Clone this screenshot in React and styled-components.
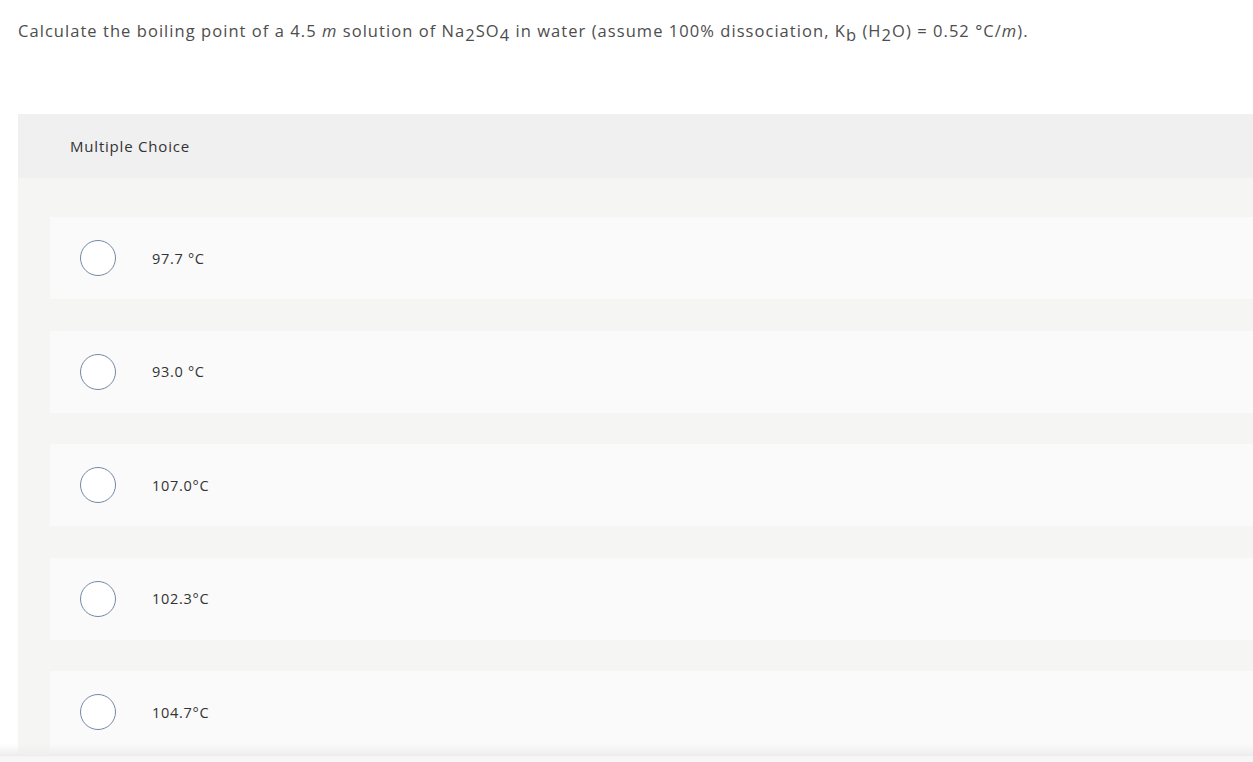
import styled, { createGlobalStyle } from "styled-components";

const Global = createGlobalStyle`
  html, body {
    margin: 0;
    padding: 0;
    background: #ffffff;
    font-family: "Open Sans", "Liberation Sans", sans-serif;
  }
`;

const Page = styled.div`
  padding: 19px 0 0 18px;
  overflow: hidden;
  height: 762px;
  box-sizing: border-box;
`;

const Question = styled.p`
  margin: 0;
  font-size: 16.5px;
  line-height: 24px;
  color: #4d4d4d;
  letter-spacing: 1.05px;
  white-space: nowrap;

  sub {
    font-size: 16.5px;
    vertical-align: -4px;
    line-height: 0;
  }
  i {
    font-style: italic;
  }
`;

const Panel = styled.section`
  margin-top: 71px;
  background: #f5f5f3;
`;

const PanelHeader = styled.div`
  height: 64px;
  background: #f0f0f0;
  display: flex;
  align-items: center;
  padding-left: 52px;
  font-size: 15px;
  letter-spacing: 0.8px;
  color: #333;
`;

const Options = styled.div`
  display: flex;
  flex-direction: column;
  gap: 31.5px;
  padding: 39px 0 0 32px;
`;

const Option = styled.label`
  height: 82px;
  background: #fafafa;
  display: flex;
  align-items: center;
  padding-left: 30px;
  gap: 36px;
  cursor: pointer;
`;

const Radio = styled.span`
  width: 34px;
  height: 34px;
  border-radius: 50%;
  border: 1.5px solid #7389a2;
  background: #fff;
  flex-shrink: 0;
`;

const OptionText = styled.span`
  font-size: 14.5px;
  color: #333;
  letter-spacing: 0.7px;
`;

const BottomShade = styled.div`
  position: fixed;
  left: 0;
  right: 0;
  bottom: 0;
  height: 18px;
  background: linear-gradient(to bottom, rgba(240, 240, 240, 0) 0%, #ededed 65%, #f6f6f6 70%, #f7f7f7 100%);
  pointer-events: none;
`;

const choices = ["97.7 °C", "93.0 °C", "107.0°C", "102.3°C", "104.7°C"];

export default function App() {
  return (
    <>
      <Global />
      <Page>
        <Question>
          Calculate the boiling point of a 4.5 <i>m</i> solution of Na<sub>2</sub>SO<sub>4</sub> in water
          (assume 100% dissociation, K<sub>b</sub> (H<sub>2</sub>O) = 0.52 °C/<i>m</i>).
        </Question>
        <Panel>
          <PanelHeader>Multiple Choice</PanelHeader>
          <Options>
            {choices.map((c) => (
              <Option key={c}>
                <Radio />
                <OptionText>{c}</OptionText>
              </Option>
            ))}
          </Options>
        </Panel>
      </Page>
      <BottomShade />
    </>
  );
}
